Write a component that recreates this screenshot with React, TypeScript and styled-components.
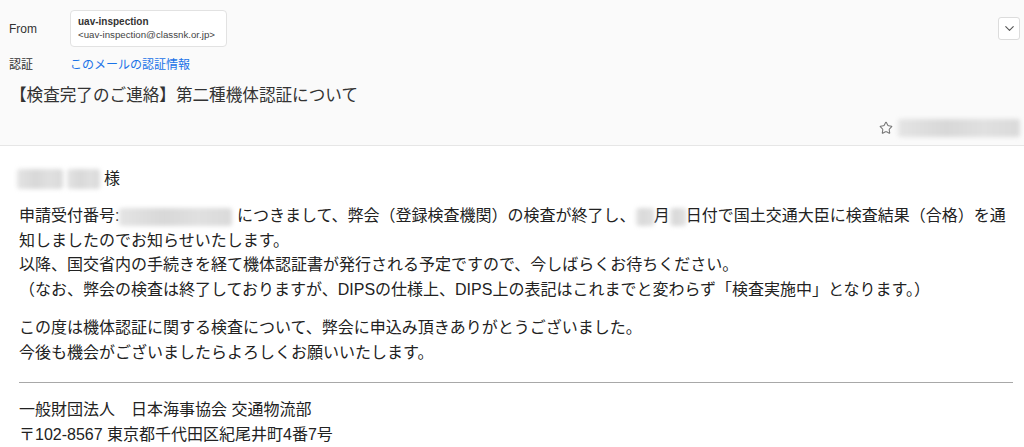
import React from "react";
import styled, {createGlobalStyle} from "styled-components";
import {ChevronDown, Star} from "lucide-react";

const GlobalStyle = createGlobalStyle`
  html, body {
    margin: 0;
    padding: 0;
    background: #ffffff;
  }
  body {
    font-family: "Liberation Sans", "Noto Sans CJK JP", sans-serif;
    color: #222222;
  }
`

const Page = styled.div`
  width: 1024px;
  height: 447px;
  overflow: hidden;
  display: flex;
  flex-direction: column;
`

const Header = styled.header`
  background: #fafafa;
  border-bottom: 1px solid #e6e6e6;
  height: 146px;
  box-sizing: border-box;
  padding: 10px 4px 0 9px;
  display: flex;
  flex-direction: column;
`

const MetaRow = styled.div`
  display: flex;
  align-items: center;
  justify-content: space-between;
`

const MetaLeft = styled.div`
  display: flex;
  align-items: center;
`

const Label = styled.span`
  width: 61px;
  font-size: 12px;
  color: #333;
`

const SenderBox = styled.div`
  background: #fff;
  border: 1px solid #e2e2e2;
  border-radius: 4px;
  width: 157px;
  height: 37px;
  box-sizing: border-box;
  padding: 5px 6px 0 7px;
  display: flex;
  flex-direction: column;
  gap: 2px;
`

const SenderName = styled.span`
  font-size: 10px;
  font-weight: bold;
  color: #333;
`

const SenderAddr = styled.span`
  font-size: 9.7px;
  color: #444;
  white-space: nowrap;
`

const AuthRow = styled(MetaLeft)`
  margin-top: 8px;
`

const AuthLink = styled.a`
  font-size: 12px;
  color: #1a73e8;
  text-decoration: none;
`

const ExpandButton = styled.button`
  width: 22px;
  height: 23px;
  padding: 0;
  border: 1px solid #dcdcdc;
  border-radius: 3px;
  background: #fff;
  color: #555;
  display: flex;
  align-items: center;
  justify-content: center;
`

const Subject = styled.h1`
  margin: 10px 0 0 1px;
  font-size: 16.6px;
  font-weight: normal;
  color: #333;
`

const DateRow = styled.div`
  margin-top: auto;
  margin-bottom: 8px;
  display: flex;
  align-items: center;
  justify-content: flex-end;
  gap: 5px;
  color: #777;
`

const Blur = styled.span<{ w: number; h?: number }>`
  display: inline-block;
  width: ${({w}) => w}px;
  height: ${({h}) => h ?? 18}px;
  vertical-align: middle;
  background: linear-gradient(90deg, #e4e4e4 0%, #d8d8d8 40%, #e0e0e0 70%, #dadada 100%);
  filter: blur(2px);
  border-radius: 3px;
`

const Body = styled.main`
  padding: 21px 11px 0 19px;
  font-size: 16px;
  line-height: 24.5px;
  color: #222;
`

const Greeting = styled.div`
  display: flex;
  align-items: center;
  gap: 4px;
  margin-left: -2px;
`

const Paragraph = styled.p<{ gap: number }>`
  margin: ${({gap}) => gap}px 0 0;
`

const Separator = styled.hr`
  margin: 17px 0 0;
  border: none;
  border-top: 1px solid #a8a8a8;
`

const Signature = styled.div`
  margin-top: 14px;
  line-height: 25px;
`

export default function App() {
    return (
        <Page>
            <GlobalStyle/>
            <Header>
                <MetaRow>
                    <MetaLeft>
                        <Label>From</Label>
                        <SenderBox>
                            <SenderName>uav-inspection</SenderName>
                            <SenderAddr>&lt;uav-inspection@classnk.or.jp&gt;</SenderAddr>
                        </SenderBox>
                    </MetaLeft>
                    <ExpandButton><ChevronDown size={15} strokeWidth={1.8}/></ExpandButton>
                </MetaRow>
                <AuthRow>
                    <Label>認証</Label>
                    <AuthLink href="#">このメールの認証情報</AuthLink>
                </AuthRow>
                <Subject>【検査完了のご連絡】第二種機体認証について</Subject>
                <DateRow>
                    <Star size={14} strokeWidth={1.8}/>
                    <Blur w={122} h={18}/>
                </DateRow>
            </Header>
            <Body>
                <Greeting>
                    <Blur w={46} h={20}/>
                    <Blur w={33} h={20}/>
                    <span>様</span>
                </Greeting>
                <Paragraph gap={13}>
                    申請受付番号:<Blur w={113}/> につきまして、弊会（登録検査機関）の検査が終了し、<Blur w={18}/>月<Blur w={16}/>日付で国土交通大臣に検査結果（合格）を通知しましたのでお知らせいたします。<br/>
                    以降、国交省内の手続きを経て機体認証書が発行される予定ですので、今しばらくお待ちください。<br/>
                    （なお、弊会の検査は終了しておりますが、DIPSの仕様上、DIPS上の表記はこれまでと変わらず「検査実施中」となります。）
                </Paragraph>
                <Paragraph gap={14}>
                    この度は機体認証に関する検査について、弊会に申込み頂きありがとうございました。<br/>
                    今後も機会がございましたらよろしくお願いいたします。
                </Paragraph>
                <Separator/>
                <Signature>
                    一般財団法人　日本海事協会 交通物流部<br/>
                    〒102-8567 東京都千代田区紀尾井町4番7号
                </Signature>
            </Body>
        </Page>
    );
}
